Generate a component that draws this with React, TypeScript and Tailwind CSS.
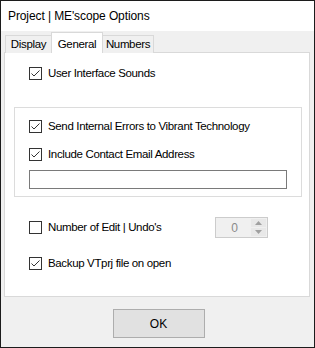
import React from 'react';

function CheckBox({ checked }: { checked: boolean }) {
  return (
    <div className="w-[13px] h-[13px] border border-[#333333] bg-white shrink-0 flex items-center justify-center">
      {checked && (
        <svg width="11" height="11" viewBox="0 0 11 11">
          <path d="M1.5 5.5 L4 8 L9.5 2.5" fill="none" stroke="#333333" strokeWidth="1" />
        </svg>
      )}
    </div>
  );
}

function CheckRow({ label, checked }: { label: string; checked: boolean }) {
  return (
    <div className="flex items-center h-[13px]">
      <CheckBox checked={checked} />
      <span className="ml-[6px] text-[11.5px] tracking-[-0.35px] leading-none text-black whitespace-nowrap">{label}</span>
    </div>
  );
}

export default function App() {
  return (
    <div
      className="w-[315px] h-[348px] border border-[#1c1c1c] bg-[#f0f0f0] flex flex-col"
      style={{ fontFamily: '"Liberation Sans", Arial, sans-serif' }}
    >
      {/* Title bar */}
      <div className="h-[30px] bg-white flex items-center pl-[7px] text-[12px] tracking-[-0.1px] text-black shrink-0">
        Project | ME'scope Options
      </div>

      <div className="px-[3px] pt-[1px]">
        {/* Tabs */}
        <div className="flex items-end h-[21px] pl-[1px] relative z-10 text-[11.5px] tracking-[-0.35px]">
          <div className="h-[18px] w-[47px] border border-b-0 border-[#d9d9d9] bg-[#f0f0f0] flex items-center justify-center">
            Display
          </div>
          <div className="h-[21px] w-[52px] -ml-[1px] border border-b-0 border-[#d9d9d9] bg-white flex items-start pt-[3px] justify-center">
            General
          </div>
          <div className="h-[18px] w-[52px] -ml-[1px] border border-b-0 border-[#d9d9d9] bg-[#f0f0f0] flex items-center justify-center">
            Numbers
          </div>
        </div>

        {/* Panel */}
        <div className="-mt-[1px] h-[245px] w-[306px] border border-[#d9d9d9] bg-white flex flex-col">
          <div className="pl-[24px] mt-[14px]">
            <CheckRow label="User Interface Sounds" checked />
          </div>

          <div className="ml-[9px] mt-[27px] w-[288px] h-[90px] border border-[#dcdcdc] flex flex-col">
            <div className="pl-[14px] mt-[12px]">
              <CheckRow label="Send Internal Errors to Vibrant Technology" checked />
            </div>
            <div className="pl-[14px] mt-[15px]">
              <CheckRow label="Include Contact Email Address" checked />
            </div>
            <div className="ml-[14px] mt-[9px] w-[258px] h-[19px] border border-[#7a7a7a] bg-white" />
          </div>

          <div className="pl-[24px] mt-[20px] flex items-center h-[21px]">
            <div className="w-[186px]">
              <CheckRow label="Number of Edit | Undo's" checked={false} />
            </div>
            <div className="w-[53px] h-[21px] border border-[#cccccc] bg-[#f0f0f0] flex">
              <div className="flex-1 flex items-center justify-center text-[12px] text-[#8a8a8a] pl-[2px]">0</div>
              <div className="w-[15px] my-[1px] mr-[1px] flex flex-col gap-[1px]">
                <div className="flex-1 bg-[#e8e8e8] flex items-center justify-center">
                  <svg width="7" height="4" viewBox="0 0 7 4"><path d="M0 4 L3.5 0 L7 4 Z" fill="#a0a0a0" /></svg>
                </div>
                <div className="flex-1 bg-[#e8e8e8] flex items-center justify-center">
                  <svg width="7" height="4" viewBox="0 0 7 4"><path d="M0 0 L3.5 4 L7 0 Z" fill="#a0a0a0" /></svg>
                </div>
              </div>
            </div>
          </div>

          <div className="pl-[24px] mt-[19px]">
            <CheckRow label="Backup VTprj file on open" checked />
          </div>
        </div>
      </div>

      {/* Footer */}
      <div className="flex justify-center mt-[12px] pl-[2px]">
        <button className="w-[92px] h-[29px] border border-[#adadad] bg-[#e1e1e1] text-[12px] text-black">
          OK
        </button>
      </div>
    </div>
  );
}
